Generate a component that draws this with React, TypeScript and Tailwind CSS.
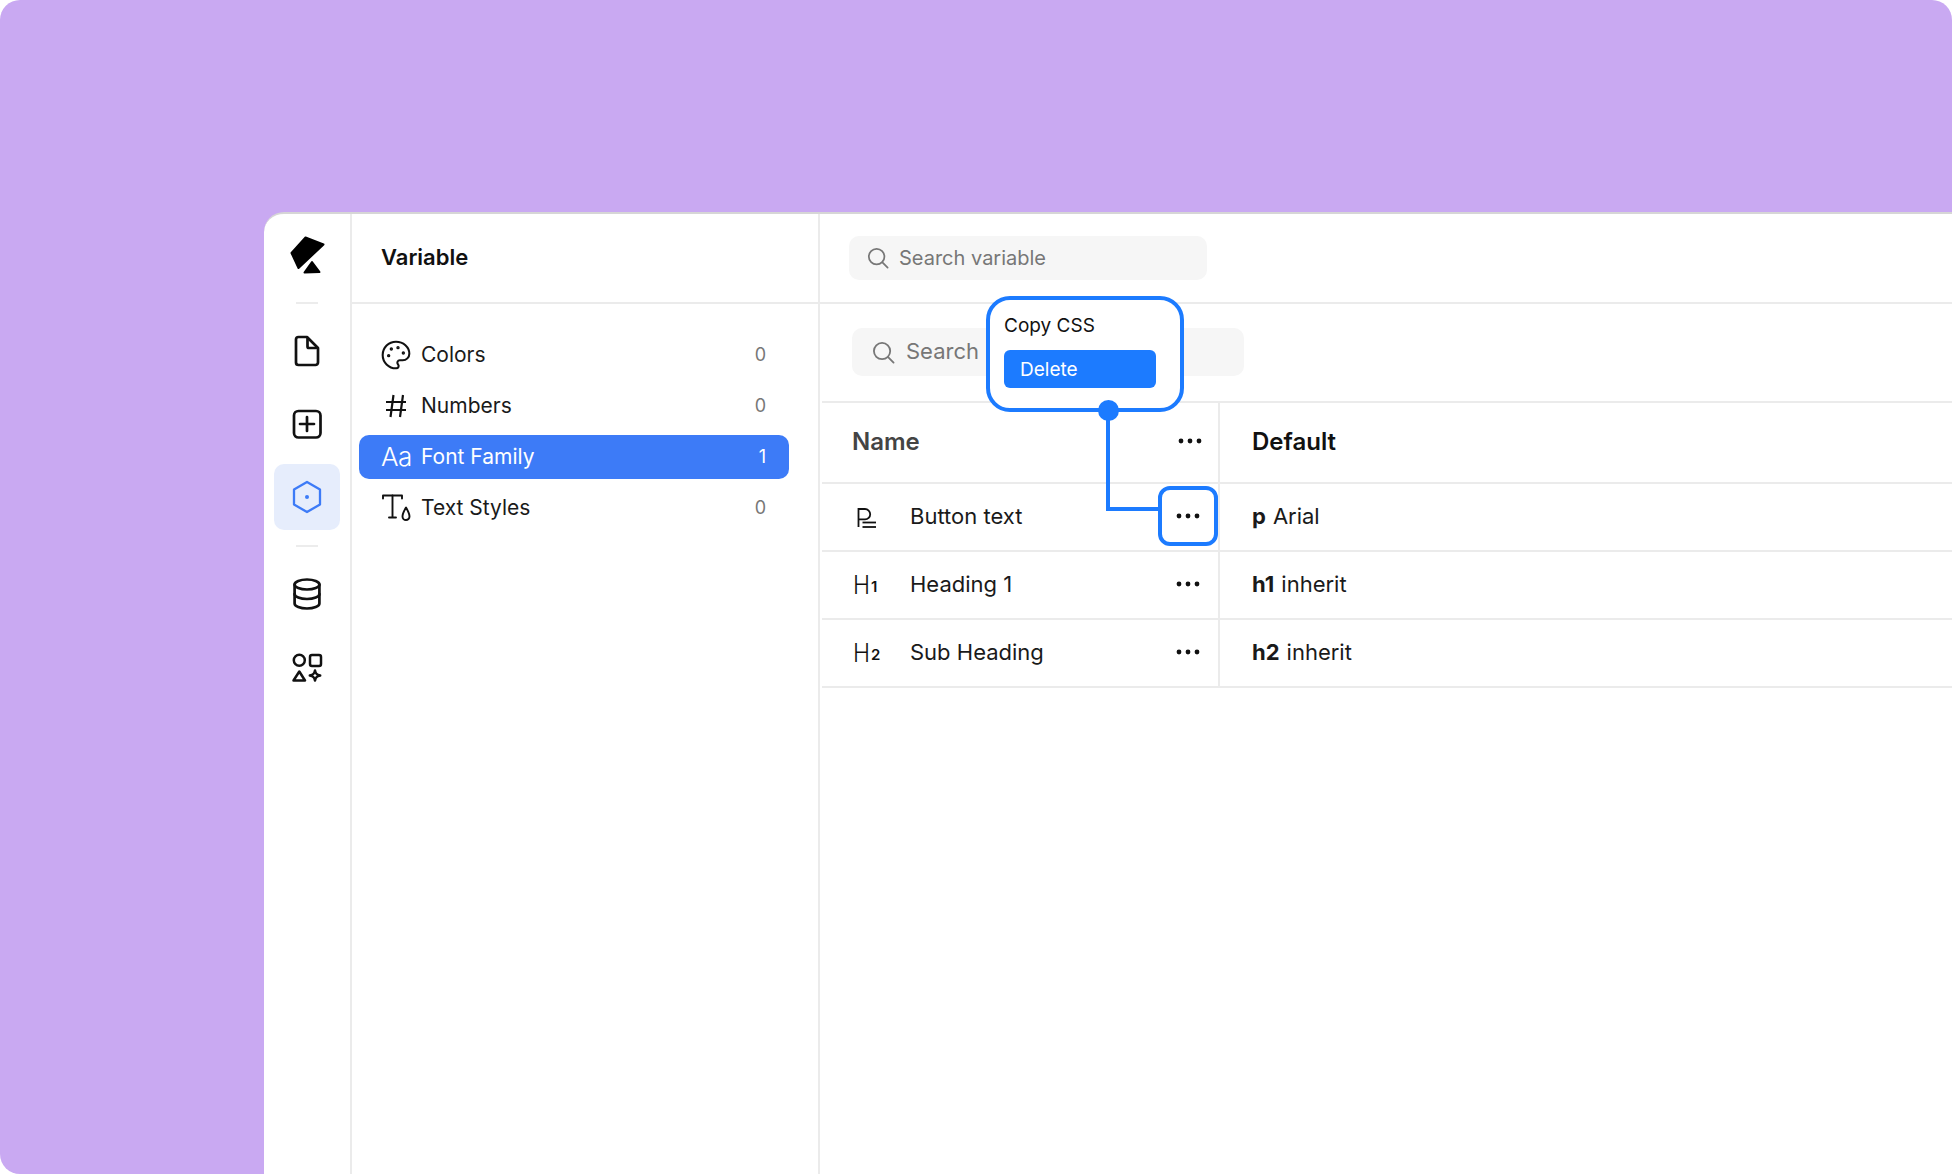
import React from "react";
import { Palette } from "lucide-react";

const font = { fontFamily: '"Inter", "Liberation Sans", sans-serif' };

function Dots({ className = "" }: { className?: string }) {
  return (
    <svg width="24" height="6" viewBox="0 0 24 6" className={className}>
      <circle cx="3" cy="3" r="2.4" fill="#111" />
      <circle cx="12" cy="3" r="2.4" fill="#111" />
      <circle cx="21" cy="3" r="2.4" fill="#111" />
    </svg>
  );
}

function SearchIcon({ size }: { size: number }) {
  return (
    <svg width={size} height={size} viewBox="0 0 24 24" fill="none" stroke="#777" strokeWidth="1.9" strokeLinecap="round" className="shrink-0">
      <circle cx="10.5" cy="10.5" r="8.5" />
      <path d="M16.8 16.8 L22.5 22.5" />
    </svg>
  );
}

function RailIcon({ children, color = "#111", sw = 2.7 }: { children: React.ReactNode; color?: string; sw?: number }) {
  return (
    <svg width="40" height="40" viewBox="0 0 40 40" fill="none" stroke={color} strokeWidth={sw} strokeLinecap="round" strokeLinejoin="round">
      {children}
    </svg>
  );
}

function RailDivider({ className }: { className: string }) {
  return <div className={"h-[2px] w-[22px] bg-[#ececec] " + className} />;
}

function Heading({ n }: { n: string }) {
  return (
    <span className="flex w-[56px] shrink-0 items-end text-[#111]">
      <span className="ml-[-1px] inline-block origin-center scale-y-[1.14] text-[23px] font-light leading-[24px]">H</span>
      <span className="ml-[1px] text-[15px] font-semibold leading-[20px]">{n}</span>
    </span>
  );
}

function ParagraphIcon() {
  return (
    <span className="flex w-[56px] shrink-0">
      <svg width="30" height="26" viewBox="0 0 30 26" fill="none" stroke="#111" strokeWidth="1.8">
        <path d="M4.5 23 V5 H11 a5.2 5.2 0 0 1 0 10.4 H4.5" />
        <path d="M8.5 18.5 H22" />
        <path d="M8.5 23 H22" />
      </svg>
    </span>
  );
}

function NavRow({ icon, label, count, active = false }: { icon: React.ReactNode; label: string; count: string; active?: boolean }) {
  return (
    <div className={"flex h-[44px] items-center rounded-[10px] pl-[23px] pr-[23px] " + (active ? "bg-[#3d7bf7] text-white" : "text-[#1a1a1a]")}>
      <span className="flex w-[40px] shrink-0 items-center">{icon}</span>
      <span className="ml-[-1px] flex-1 text-[21px] leading-[24px]">{label}</span>
      <span className={"mt-[-2px] text-[18px] " + (active ? "text-white" : "text-[#777]")}>{count}</span>
    </div>
  );
}

function TableRow({ icon, name, tag, value }: { icon: React.ReactNode; name: string; tag: string; value: string }) {
  return (
    <div className="flex h-[68px] border-b-2 border-[#ebebeb]">
      <div className="flex w-[398px] items-center border-r-2 border-[#ebebeb] pl-[32px] pr-[18px]">
        {icon}
        <span className="mt-[-2px] flex-1 text-[22px] text-[#1a1a1a]">{name}</span>
        <Dots className="mt-[-2px]" />
      </div>
      <div className="flex items-center pl-[32px] text-[22px] text-[#1a1a1a]">
        <span className="mr-[7px] mt-[-2px] font-bold">{tag}</span>
        <span className="mt-[-2px]">{value}</span>
      </div>
    </div>
  );
}

export default function App() {
  return (
    <div className="relative h-[1174px] w-[1952px] overflow-hidden bg-white" style={font}>
      <div className="flex h-full w-full flex-col rounded-[20px] bg-[#c9a9f2] pl-[264px] pt-[212px]">
        <div className="flex min-h-0 flex-1 rounded-tl-[20px] border-t-2 border-[#d6d6d6] bg-white">
          {/* Rail */}
          <div className="flex w-[86px] shrink-0 flex-col items-center pt-[18px]">
            <svg width="40" height="44" viewBox="0 0 40 44" fill="#000" stroke="#000" strokeWidth="2" strokeLinejoin="round">
              <path d="M18.5 5.5 L36.5 12.5 L11.5 36 L4.5 21 Z" />
              <path d="M25 30 L32.5 40 L17.5 40.5 Z" />
            </svg>
            <RailDivider className="mt-[26px]" />
            <div className="mt-[27px]">
              <RailIcon>
                <path d="M11.5 6 H20 L31 17 V31.5 a2.5 2.5 0 0 1 -2.5 2.5 H11.5 a2.5 2.5 0 0 1 -2.5 -2.5 V8.5 a2.5 2.5 0 0 1 2.5 -2.5 Z" />
                <path d="M20.5 7.5 V15.5 a1.5 1.5 0 0 0 1.5 1.5 H29" />
              </RailIcon>
            </div>
            <div className="mt-[33px]">
              <RailIcon>
                <rect x="7" y="7" width="26.5" height="26.5" rx="4.5" />
                <path d="M20 13 V27 M13 20 H27" />
              </RailIcon>
            </div>
            <div className="mt-[20px] flex h-[66px] w-[66px] items-center justify-center rounded-[10px] bg-[#e6edfc]">
              <RailIcon color="#3d7bf7" sw={2.3}>
                <path d="M20 5 L33 12.5 V27.5 L20 35 L7 27.5 V12.5 Z" />
                <circle cx="20" cy="20" r="2" fill="#3d7bf7" stroke="none" />
              </RailIcon>
            </div>
            <RailDivider className="mt-[15px]" />
            <div className="mt-[27px]">
              <RailIcon>
                <ellipse cx="20" cy="10.5" rx="12.4" ry="5" />
                <path d="M7.6 10.5 V29.5 C7.6 32.3 13.2 34.5 20 34.5 C26.8 34.5 32.4 32.3 32.4 29.5 V10.5" />
                <path d="M7.6 20 C7.6 22.8 13.2 25 20 25 C26.8 25 32.4 22.8 32.4 20" />
              </RailIcon>
            </div>
            <div className="mt-[34px]">
              <RailIcon sw={2.5}>
                <circle cx="12.3" cy="12.3" r="5.5" />
                <rect x="23" y="7" width="11" height="11" rx="2" />
                <path d="M12.3 23.5 L18 32.5 H6.5 Z" />
                <path d="M28 22.5 C28.6 25.8 29.6 26.8 33.2 27.5 C29.6 28.2 28.6 29.2 28 32.6 C27.4 29.2 26.4 28.2 22.8 27.5 C26.4 26.8 27.4 25.8 28 22.5 Z" />
              </RailIcon>
            </div>
          </div>

          {/* Sidebar */}
          <div className="flex w-[470px] shrink-0 flex-col border-x-2 border-[#ebebeb]">
            <div className="flex h-[90px] shrink-0 items-center border-b-2 border-[#ebebeb] pb-[1px] pl-[29px]">
              <span className="text-[22px] font-semibold text-[#111]">Variable</span>
            </div>
            <div className="flex flex-col gap-[7px] pl-[7px] pr-[29px] pt-[29px]">
              <NavRow
                label="Colors"
                count="0"
                icon={<Palette size={32} strokeWidth={1.55} color="#111" className="ml-[-2px]" />}
              />
              <NavRow
                label="Numbers"
                count="0"
                icon={
                  <svg width="28" height="28" viewBox="0 0 28 28" fill="none" stroke="#111" strokeWidth="2.2">
                    <path d="M4 10 H24 M4 18 H24 M11.5 3 L8.5 25 M21 3 L18 25" />
                  </svg>
                }
              />
              <NavRow
                active
                label="Font Family"
                count="1"
                icon={<span className="ml-[-1px] text-[26px] font-light leading-[32px] tracking-[-0.5px] text-white">Aa</span>}
              />
              <NavRow
                label="Text Styles"
                count="0"
                icon={
                  <svg width="30" height="30" viewBox="0 0 30 30" fill="none" stroke="#111" strokeWidth="1.9" strokeLinecap="round" strokeLinejoin="round">
                    <path d="M1 5.5 V2.5 H20 V5.5" />
                    <path d="M10.5 2.5 V24.5 M7 24.5 H14" />
                    <path d="M24 14.5 C21.6 18.6 20.5 21 20.5 23.5 a3.5 3.5 0 0 0 7 0 C27.5 21 26.4 18.6 24 14.5 Z" />
                  </svg>
                }
              />
            </div>
          </div>

          {/* Main */}
          <div className="flex min-w-0 flex-1 flex-col">
            <div className="flex h-[90px] shrink-0 items-start border-b-2 border-[#ebebeb] pl-[29px] pt-[22px]">
              <div className="flex h-[44px] w-[358px] items-center gap-[10px] rounded-[10px] bg-[#f6f6f6] pl-[18px]">
                <SearchIcon size={22} />
                <span className="mt-[-1px] text-[20px] text-[#777]">Search variable</span>
              </div>
            </div>
            <div className="flex h-[97px] shrink-0 pl-[32px] pt-[24px]">
              <div className="flex h-[48px] w-[392px] items-center gap-[11px] rounded-[10px] bg-[#f6f6f6] pl-[20px]">
                <SearchIcon size={23} />
                <span className="mt-[-1px] text-[22px] text-[#777]">Search</span>
              </div>
            </div>
            <div className="ml-[2px] border-t-2 border-[#ebebeb]">
              <div className="flex h-[81px] border-b-2 border-[#ebebeb]">
                <div className="flex w-[398px] items-center justify-between border-r-2 border-[#ebebeb] pl-[30px] pr-[16px]">
                  <span className="mt-[-1px] text-[24px] font-semibold text-[#444]">Name</span>
                  <Dots className="mt-[-3px]" />
                </div>
                <div className="flex items-center pl-[32px]">
                  <span className="mt-[-1px] text-[24px] font-semibold text-[#111]">Default</span>
                </div>
              </div>
              <TableRow icon={<ParagraphIcon />} name="Button text" tag="p" value="Arial" />
              <TableRow icon={<Heading n="1" />} name="Heading 1" tag="h1" value="inherit" />
              <TableRow icon={<Heading n="2" />} name="Sub Heading" tag="h2" value="inherit" />
            </div>
          </div>
        </div>
      </div>

      {/* Annotation overlay */}
      <div className="absolute left-[1106px] top-[410px] h-[101px] w-[54px] border-b-4 border-l-4 border-[#1c7bff]" />
      <div className="absolute left-[1158px] top-[486px] h-[60px] w-[60px] rounded-[12px] border-4 border-[#1c7bff]" />
      <div className="absolute left-[986px] top-[296px] flex h-[116px] w-[198px] flex-col rounded-[24px] border-4 border-[#1c7bff] bg-white pl-[14px] pt-[14px]">
        <span className="text-[19px] leading-[24px] text-[#111]">Copy CSS</span>
        <div className="mt-[12px] flex h-[38px] w-[152px] items-center rounded-[6px] bg-[#1c7bff] pl-[16px] pt-[2px]">
          <span className="text-[19px] text-white">Delete</span>
        </div>
      </div>
      <div className="absolute left-[1098px] top-[400px] h-[21px] w-[21px] rounded-full bg-[#1c7bff]" />
    </div>
  );
}
